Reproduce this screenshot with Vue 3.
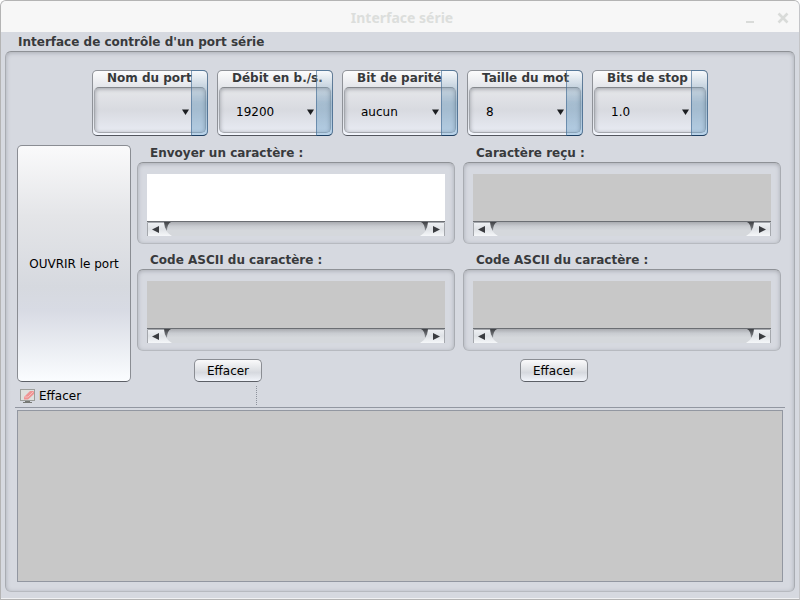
<script setup>
import { reactive } from 'vue'

const settings = reactive([
  { id: 'port', label: 'Nom du port', value: '', options: [''] },
  { id: 'speed', label: 'Débit en b./s.', value: '19200', options: ['9600', '19200', '38400'] },
  { id: 'parity', label: 'Bit de parité', value: 'aucun', options: ['aucun', 'pair', 'impair'] },
  { id: 'size', label: 'Taille du mot', value: '8', options: ['7', '8'] },
  { id: 'stop', label: 'Bits de stop', value: '1.0', options: ['1.0', '1.5', '2.0'] }
])

const columns = reactive([
  {
    id: 'send',
    fields: [
      { id: 'send-char', label: 'Envoyer un caractère :', text: '', editable: true },
      { id: 'send-code', label: 'Code ASCII du caractère :', text: '', editable: false }
    ]
  },
  {
    id: 'receive',
    fields: [
      { id: 'recv-char', label: 'Caractère reçu :', text: '', editable: false },
      { id: 'recv-code', label: 'Code ASCII du caractère :', text: '', editable: false }
    ]
  }
])

const log = reactive({ text: '' })

function clearColumn(column) {
  column.fields.forEach((f) => { f.text = '' })
}
</script>

<template>
  <div class="window">
    <header class="titlebar">
      <h1 class="title">Interface série</h1>
      <div class="controls">
        <button class="control" aria-label="Réduire">
          <svg width="12" height="12" viewBox="0 0 12 12"><path d="M1 10h8" stroke="#d9dbd9" stroke-width="2" /></svg>
        </button>
        <button class="control" aria-label="Fermer">
          <svg width="12" height="12" viewBox="0 0 12 12"><path d="M1.5 1.5l9 9M10.5 1.5l-9 9" stroke="#d9dbd9" stroke-width="2.6" /></svg>
        </button>
      </div>
    </header>

    <main class="body">
      <h2 class="group-title">Interface de contrôle d'un port série</h2>
      <div class="group main-group">
        <div class="settings">
          <div v-for="s in settings" :key="s.id" class="setting">
            <label class="setting-label" :for="s.id">{{ s.label }}</label>
            <div class="setting-box">
              <select :id="s.id" v-model="s.value" class="setting-select">
                <option v-for="o in s.options" :key="o" :value="o">{{ o }}</option>
              </select>
              <svg class="arrow" width="7" height="6" viewBox="0 0 7 6"><path d="M0 0.5h7L3.5 6z" fill="#1c1e21" /></svg>
            </div>
            <span class="strip"></span>
          </div>
        </div>

        <div class="exchange">
          <button class="button open-button">OUVRIR le port</button>
          <div class="columns">
            <section v-for="c in columns" :key="c.id" class="column">
              <div v-for="f in c.fields" :key="f.id" class="field">
                <label class="field-label" :for="f.id">{{ f.label }}</label>
                <div class="group field-group">
                  <textarea :id="f.id" v-model="f.text" class="field-text" :readonly="!f.editable"></textarea>
                  <div class="scrollbar">
                    <svg width="25" height="14" viewBox="0 0 25 14">
                      <path d="M17 0h7q-4 2-4 9q-3-4-3-9z" fill="url(#notch)" />
                      <path d="M0 0h17c0 7 3 11 8 14H0z" fill="url(#cap)" />
                      <path d="M0.5 14V0.5H17" fill="none" stroke="#a5a8ad" />
                      <path d="M12 4v7L5 7.5z" fill="#3a3c40" />
                    </svg>
                    <svg width="25" height="14" viewBox="0 0 25 14">
                      <path d="M8 0H1q4 2 4 9q3-4 3-9z" fill="url(#notch)" />
                      <path d="M25 0H8c0 7-3 11-8 14h25z" fill="url(#cap)" />
                      <path d="M24.5 14V0.5H8" fill="none" stroke="#a5a8ad" />
                      <path d="M13 4v7l7-3.500z" fill="#3a3c40" />
                    </svg>
                  </div>
                </div>
              </div>
              <button class="button clear-button" @click="clearColumn(c)">Effacer</button>
            </section>
          </div>
        </div>

        <div class="toolbar">
          <button class="tool" @click="log.text = ''">
            <svg width="16" height="16" viewBox="0 0 16 16">
              <rect x="0.5" y="1.5" width="14" height="11" fill="#dfe0de" stroke="#9c9e9b" />
              <path d="M5 13h5v1h2v1H3v-1h2z" fill="#777975" />
              <path d="M4 9l6-6h4v3l-6 5.500H4z" fill="#ee9494" />
              <path d="M4.500 9H8l5.500-5.500" fill="none" stroke="#f8bcbc" />
            </svg>
            Effacer
          </button>
          <span class="separator"></span>
        </div>
        <textarea v-model="log.text" class="log" aria-label="Journal" readonly></textarea>
      </div>
    </main>

    <svg class="defs" width="0" height="0" aria-hidden="true">
      <linearGradient id="cap" x1="0" y1="0" x2="0" y2="1">
        <stop offset="0" stop-color="#f0f2f5" />
        <stop offset="0.5" stop-color="#dfe2e6" />
        <stop offset="1" stop-color="#f5f7f9" />
      </linearGradient>
      <linearGradient id="notch" x1="0" y1="0" x2="0" y2="1">
        <stop offset="0" stop-color="#3f4145" />
        <stop offset="1" stop-color="#8b8e93" />
      </linearGradient>
    </svg>
  </div>
</template>

<style>
body {
  background: #fff;
}
</style>

<style scoped>
* {
  box-sizing: border-box;
}

.window {
  position: relative;
  display: flex;
  flex-direction: column;
  min-height: 100vh;
  overflow: hidden;
  border: 1px solid #b4b4b4;
  border-right-color: #c4c5c8;
  border-radius: 6px 6px 0 0;
  background: #d6d9e0;
  color: #000;
  font: 12px/16px "DejaVu Sans", sans-serif;
}

.titlebar {
  display: flex;
  align-items: center;
  height: 31px;
  padding: 3px 10px 0 58px;
  background: #f7f7f7;
}

.title {
  flex: 1;
  margin: 0;
  color: #dcdedc;
  font: bold 14px/16px "Noto Sans", sans-serif;
  text-align: center;
}

.controls {
  display: flex;
  gap: 20px;
}

.control {
  display: block;
  width: 12px;
  height: 12px;
  padding: 0;
  border: 0;
  background: none;
}

.control svg,
.tool svg,
.scrollbar svg {
  display: block;
}

.body {
  display: flex;
  flex: 1;
  flex-direction: column;
  padding: 2px 4px 6px;
  border-bottom: 1px solid #f0f1f3;
}

.group-title,
.field-label,
.setting-label {
  margin: 0;
  color: #383a3c;
  font-size: 12px;
  font-weight: bold;
  line-height: 16px;
}

.group-title {
  padding-left: 13px;
}

.group {
  border: 1px solid #a9acb2;
  border-top-color: #8e9196;
  border-bottom-color: #b7bac0;
  border-radius: 6px;
  box-shadow: inset 0 1px 4px #a9acb3;
}

.main-group {
  display: flex;
  flex: 1;
  flex-direction: column;
  margin-top: 1px;
  padding: 18px 11px 9px;
}

.settings {
  display: flex;
  justify-content: center;
  gap: 9px;
}

.setting {
  position: relative;
  width: 116px;
  height: 66px;
  padding: 0 1px;
  border: 1px solid #8f9298;
  border-bottom-color: #53565e;
  border-radius: 5px;
  background: linear-gradient(#fcfcfd, #dfe1e6 30%, #d6d9df 60%, #f3f6fd);
}

.setting-label {
  display: block;
  height: 16px;
  padding-left: 13px;
  line-height: 14px;
  white-space: nowrap;
}

.setting-box {
  position: relative;
  height: 46px;
  border: 1px solid #a4a7ad;
  border-top-color: #85888d;
  border-radius: 5px;
  background: linear-gradient(#e6e7ea, #d8dae0 50%, #e8ebf3);
  box-shadow: inset 0 1px 4px #9a9da4;
}

.setting-select {
  width: 100%;
  height: 100%;
  padding: 3px 0 0 16px;
  border: 0;
  background: none;
  color: #000;
  font: inherit;
  appearance: none;
}

.arrow {
  position: absolute;
  top: 21px;
  right: 16px;
}

.strip {
  position: absolute;
  top: -1px;
  right: -1px;
  bottom: -1px;
  width: 17px;
  border: 1px solid rgba(60, 100, 140, 0.6);
  border-bottom-color: rgba(10, 50, 90, 0.8);
  border-radius: 0 5px 5px 0;
  background: linear-gradient(rgba(230, 240, 248, 0.2), rgba(85, 140, 180, 0.4) 50%, rgba(100, 160, 205, 0.4));
  pointer-events: none;
}

.exchange {
  display: grid;
  grid-template-columns: 114px 1fr;
  gap: 6px;
  margin: 9px 2px 0 0;
}

.columns {
  display: grid;
  grid-template-columns: 1fr 1fr;
  gap: 8px;
}

.button {
  border: 1px solid #8a8d93;
  border-bottom-color: #5c5f66;
  border-radius: 5px;
  color: #000;
  font: inherit;
}

.open-button {
  padding: 0;
  background: linear-gradient(#fafafb, #e4e5e8 30%, #d6d9df 60%, #d8dbe4 70%, #fbfdff);
}

.column {
  display: flex;
  flex-direction: column;
}

.field-label {
  display: block;
  padding-left: 13px;
}

.field-group {
  margin: 1px 0 8px;
  padding: 11px 9px 7px;
}

.field-text,
.log {
  display: block;
  width: 100%;
  border: 0;
  outline: 0;
  background: #fff;
  color: #000;
  font: inherit;
  resize: none;
}

.field-text {
  height: 47px;
  padding: 4px;
  overflow: hidden;
}

.field-text:read-only,
.log {
  background: #c8c8c8;
}

.scrollbar {
  display: flex;
  justify-content: space-between;
  height: 15px;
  border-top: 1px solid #6b6e73;
  background: linear-gradient(#a9abb0, #c9ccd1 30%, #d5d8dc 60%);
}

.clear-button {
  align-self: flex-start;
  width: 68px;
  height: 23px;
  margin-left: 57px;
  padding: 0;
  background: linear-gradient(#fafafb, #e0e2e6 45%, #d6d9df 60%, #f2f5fb);
}

.toolbar {
  display: flex;
  justify-content: space-between;
  height: 26px;
  margin: 0 -2px 2px;
  padding: 4px 0 0 5px;
  border-bottom: 1px solid #9297a1;
}

.tool {
  display: flex;
  align-items: center;
  gap: 3px;
  height: 20px;
  padding: 0;
  border: 0;
  background: none;
  color: #000;
  font: inherit;
}

.separator {
  width: 529px;
  height: 19px;
  border-left: 1px dotted #8d929c;
}

.log {
  flex: 1;
  padding: 4px;
  border: 1px solid #9297a1;
}

.defs {
  position: absolute;
}
</style>
